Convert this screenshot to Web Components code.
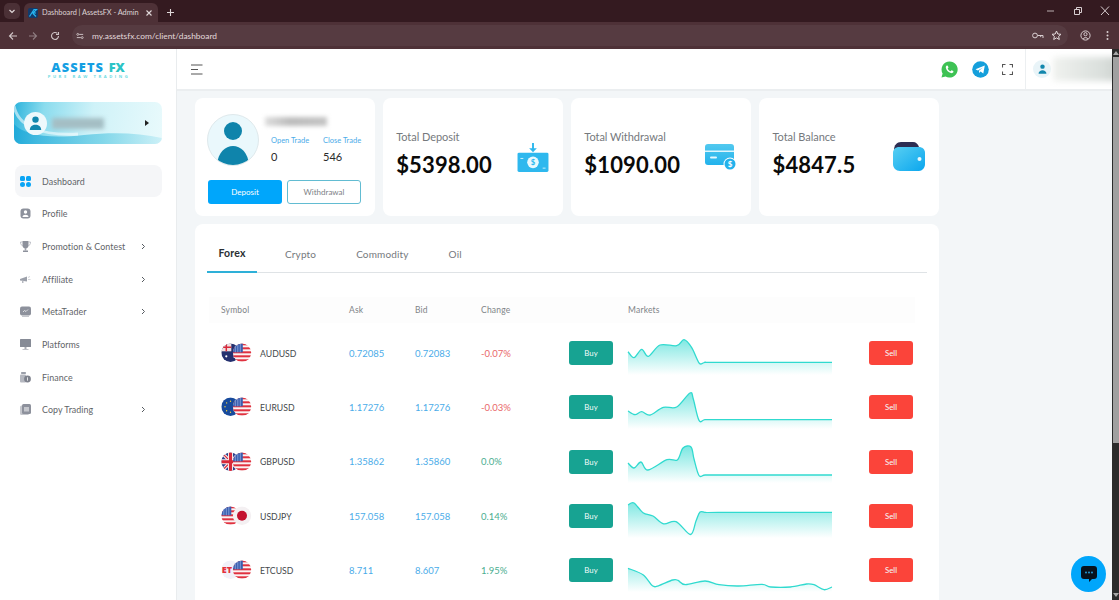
<!DOCTYPE html>
<html>
<head>
<meta charset="utf-8">
<title>Dashboard | AssetsFX - Admin</title>
<style>
  html, body { margin: 0; height: 600px; overflow: hidden; background: #f3f6f8; font-family: "Lato", "Liberation Sans", sans-serif; }
</style>
</head>
<body>

<browser-chrome></browser-chrome>

<app-shell>
  <side-nav slot="nav">
    <nav-item icon="grid" active>Dashboard</nav-item>
    <nav-item icon="profile">Profile</nav-item>
    <nav-item icon="trophy" more>Promotion &amp; Contest</nav-item>
    <nav-item icon="horn" more>Affiliate</nav-item>
    <nav-item icon="meta" more>MetaTrader</nav-item>
    <nav-item icon="screen">Platforms</nav-item>
    <nav-item icon="finance">Finance</nav-item>
    <nav-item icon="copy" more>Copy Trading</nav-item>
  </side-nav>
  <top-bar slot="top"></top-bar>
  <div slot="main">
    <card-row>
      <profile-card></profile-card>
      <stat-card label="Total Deposit" value="$5398.00" icon="deposit"></stat-card>
      <stat-card label="Total Withdrawal" value="$1090.00" icon="card"></stat-card>
      <stat-card label="Total Balance" value="$4847.5" icon="wallet"></stat-card>
    </card-row>
    <market-panel>
      <market-row symbol="AUDUSD" ask="0.72085" bid="0.72083" change="-0.07%" flags="au,us"
        points="0,12.7 6,18.7 13.7,10.3 20.3,17.3 32,6 48.7,6.7 56,0.7 63.7,8.7 71.3,24.3 77,23.3 90,23.3 204,23.3"></market-row>
      <market-row symbol="EURUSD" ask="1.17276" bid="1.17276" change="-0.03%" flags="eu,us"
        points="0,18 7,21.7 13.7,18.7 22,22 35.3,14.3 48.7,14 62,0 65.3,6 71,27.3 77,26.7 90,26.7 204,26.7"></market-row>
      <market-row symbol="GBPUSD" ask="1.35862" bid="1.35860" change="0.0%" flags="gb,us"
        points="0,16 6,21 13,15 20,23 39,12.7 49.3,13 55,1 63,0 66,12 71,28.5 77,28 90,28 204,28"></market-row>
      <market-row symbol="USDJPY" ask="157.058" bid="157.058" change="0.14%" flags="us,jp"
        points="0,3 6,1 15,10.7 25,14 35.6,21.8 48,19.6 62.5,32.5 68,19 72,10 78,10.4 90,10.4 204,10.4"></market-row>
      <market-row symbol="ETCUSD" ask="8.711" bid="8.607" change="1.95%" flags="et,us"
        points="0,12.3 15,18.7 24.4,29.8 30.4,29.8 44.7,24 50,24.4 57.4,28.7 77,25 91,28.7 110.6,30 134,28.3 142.8,31 162.4,31 178.5,28 186,28.7 196,33.7 204,31"></market-row>
    </market-panel>
  </div>
</app-shell>

<chat-bubble></chat-bubble>

<script>
// small helper, every element here just sets its shadow html once
class Base extends HTMLElement {
  constructor() {
    super();
    this.attachShadow({ mode: 'open' });
  }
  render(html) {
    this.shadowRoot.innerHTML = html;
  }
}

class BrowserChrome extends Base {
  connectedCallback() {
    this.render(`
      <style>
        :host { display: block; height: 49px; color: #d9cfd1; font-family: "Lato", "Liberation Sans", sans-serif; }
        svg { display: block; flex: none; }
        .strip { height: 22px; background: #341a20; display: flex; align-items: flex-end; }
        .list { width: 16px; height: 16px; margin: 0 4px 3px 4px; border-radius: 5px; background: #4b3036; display: grid; place-items: center; }
        .tab { width: 134px; height: 19px; background: #4e3137; border-radius: 6px 6px 0 0; display: flex; align-items: center; box-sizing: border-box; padding: 0 5px 0 4px; gap: 4px; font-size: 7.4px; letter-spacing: -.05px; white-space: nowrap; }
        .tab span { flex: 1; color: #dcd2d4; }
        .plus { margin: 0 0 3px 5px; width: 14px; height: 14px; display: grid; place-items: center; }
        .grow { flex: 1; }
        .win { display: flex; align-self: center; gap: 15px; padding-right: 8px; }
        .bar { height: 27px; background: #4e3137; display: flex; align-items: center; }
        .nav { display: flex; align-items: center; gap: 10px; padding-left: 8px; width: 64px; }
        .omni { flex: 1; height: 21px; border-radius: 11px; background: #563b41; display: flex; align-items: center; padding: 0 6px 0 4px; gap: 8px; font-size: 8.4px; color: #e3dadb; }
        .omni .grow { flex: 1; }
        .omni .key { margin-right: -1px; }
        .end { display: flex; align-items: center; gap: 15px; padding: 0 10.5px 0 12px; }
      </style>
      <div class="strip">
        <div class="list"><svg width="8" height="8" viewBox="0 0 8 8"><path d="M1.5 3l2.5 2.5L6.5 3" fill="none" stroke="#e0d8d9" stroke-width="1.2"/></svg></div>
        <div class="tab">
          <svg width="10" height="10" viewBox="0 0 10 10"><rect width="10" height="10" rx="2" fill="#123a6b"/><path d="M1.5 8.5L6 1.5h2.5L5 5h3M5 5.5L8 8.5" fill="none" stroke="#26b4f0" stroke-width="1.2"/></svg>
          <span>Dashboard | AssetsFX - Admin</span>
          <svg width="8" height="8" viewBox="0 0 8 8"><path d="M1.5 1.5l5 5M6.5 1.5l-5 5" stroke="#e0d8d9" stroke-width="1.1"/></svg>
        </div>
        <div class="plus"><svg width="9" height="9" viewBox="0 0 9 9"><path d="M4.5 1v7M1 4.5h7" stroke="#e0d8d9" stroke-width="1.1"/></svg></div>
        <div class="grow"></div>
        <div class="win">
          <svg width="12" height="10" viewBox="0 0 12 10"><path d="M2 5h7" stroke="#b9adaf" stroke-width="1"/></svg>
          <svg width="12" height="10" viewBox="0 0 12 10"><path d="M2.5 3.5h5v5h-5zM4.5 3.5V1.5h5v5h-2" fill="none" stroke="#d9cfd1" stroke-width="1"/></svg>
          <svg width="12" height="10" viewBox="0 0 12 10"><path d="M2 .5l8 8.5M10 .5L2 9" stroke="#d9cfd1" stroke-width="1"/></svg>
        </div>
      </div>
      <div class="bar">
        <div class="nav">
          <svg width="10" height="10" viewBox="0 0 10 10"><path d="M9 5H1.5M5 1.5L1.5 5 5 8.5" fill="none" stroke="#cfc4c6" stroke-width="1.1"/></svg>
          <svg width="10" height="10" viewBox="0 0 10 10"><path d="M1 5h7.5M5 1.5L8.5 5 5 8.5" fill="none" stroke="#8f7d81" stroke-width="1.1"/></svg>
          <svg width="10" height="10" viewBox="0 0 10 10" style="margin-left:2px"><path d="M8.5 5A3.5 3.5 0 1 1 7.4 2.4M8.5 1v2.5H6" fill="none" stroke="#cfc4c6" stroke-width="1.1"/></svg>
        </div>
        <div class="omni">
          <svg width="8" height="8" viewBox="0 0 10 10"><path d="M4 3h5M1 7h5" stroke="#d9cfd1" stroke-width="1.1"/><circle cx="2.2" cy="3" r="1.2" fill="none" stroke="#d9cfd1"/><circle cx="7.8" cy="7" r="1.2" fill="none" stroke="#d9cfd1"/></svg>
          <span>my.assetsfx.com/client/dashboard</span>
          <div class="grow"></div>
          <svg class="key" width="12" height="9" viewBox="0 0 12 9"><circle cx="3" cy="4.5" r="2.4" fill="none" stroke="#d9cfd1"/><path d="M5.5 4.5h5.5v2.5M8.7 4.5v1.6" fill="none" stroke="#d9cfd1"/></svg>
          <svg width="11" height="11" viewBox="0 0 11 11"><path d="M5.5 1l1.3 3 3.2.3-2.4 2.1.7 3.1-2.8-1.6-2.8 1.6.7-3.1L1 4.3 4.2 4z" fill="none" stroke="#e3dadb" stroke-width="1"/></svg>
        </div>
        <div class="end">
          <svg width="11" height="11" viewBox="0 0 11 11"><circle cx="5.5" cy="5.5" r="4.6" fill="none" stroke="#d9cfd1"/><circle cx="5.5" cy="4.2" r="1.6" fill="none" stroke="#d9cfd1"/><path d="M2.8 9c.6-1.8 4.8-1.8 5.4 0" fill="none" stroke="#d9cfd1"/></svg>
          <svg width="3" height="11" viewBox="0 0 3 11"><circle cx="1.5" cy="2" r="1" fill="#d9cfd1"/><circle cx="1.5" cy="5.5" r="1" fill="#d9cfd1"/><circle cx="1.5" cy="9" r="1" fill="#d9cfd1"/></svg>
        </div>
      </div>
    `);
  }
}

class AppShell extends Base {
  connectedCallback() {
    this.render(`
      <style>
        :host { display: grid; grid-template-columns: 177px 935px 7px; grid-template-rows: 42px 1fr; height: 551px; overflow: hidden; }
        .nav { grid-row: 1 / 3; background: #fff; border-right: 1px solid #e9ecee; box-sizing: border-box; }
        .top { grid-column: 2; }
        .main { grid-column: 2; grid-row: 2; padding: 7px 0 0 18px; overflow: hidden; }
        .scroll { grid-column: 3; grid-row: 1 / 3; background: #2b2b2b; display: flex; flex-direction: column; align-items: center; position: relative; }
        .thumb { width: 6px; height: 386px; margin-top: 8px; background: #a0a0a0; }
        .grow { flex: 1; }
        .arrow { width: 0; height: 0; border-left: 3px solid transparent; border-right: 3px solid transparent; margin: 3px 0; }
        .up { border-bottom: 4px solid #a8a8a8; position: absolute; top: 0; margin: 2px 0; }
        .down { border-top: 4px solid #a8a8a8; }
      </style>
      <div class="nav"><slot name="nav"></slot></div>
      <div class="top"><slot name="top"></slot></div>
      <div class="main"><slot name="main"></slot></div>
      <div class="scroll">
        <div class="arrow up"></div>
        <div class="thumb"></div>
        <div class="grow"></div>
        <div class="arrow down"></div>
      </div>
    `);
  }
}

class SideNav extends Base {
  connectedCallback() {
    this.render(`
      <style>
        :host { display: block; padding-top: 12px; }
        .logo { text-align: center; height: 41px; font-family: "Open Sans", sans-serif; }
        .name { font-size: 12.8px; font-weight: 800; letter-spacing: 1.15px; line-height: 13px; color: #159fe3; }
        .name b { color: #2cc4c6; font-weight: 800; letter-spacing: 0; }
        .tag { font-size: 4.2px; font-weight: 700; letter-spacing: 2.55px; color: #6fdbe2; line-height: 6px; margin-right: -2px; }
        .user { margin: 0 14px 20.8px 14px; height: 42px; border-radius: 7px; overflow: hidden; position: relative; background: linear-gradient(100deg, #2cb3dc 0%, #8bdcee 20%, #cff2f8 52%, #e9fafc 100%); display: flex; align-items: center; padding-left: 10px; gap: 5px; }
        .user svg.wave { position: absolute; inset: 0; }
        .ava { width: 23px; height: 23px; border-radius: 50%; background: #eef9fc; display: grid; place-items: center; position: relative; }
        .blur { width: 52px; height: 11px; background: #a4bec4; filter: blur(2px); position: relative; }
        .caret { position: absolute; right: 13px; top: 18px; width: 0; height: 0; border-left: 4px solid #222; border-top: 3px solid transparent; border-bottom: 3px solid transparent; }
        .items { padding: 0 14px 0 15px; display: flex; flex-direction: column; }
      </style>
      <div class="logo">
        <div class="name">ASSETS <b>FX</b></div>
        <div class="tag">PURE RAW TRADING</div>
      </div>
      <div class="user">
        <svg class="wave" width="148" height="42" viewBox="0 0 148 42"><defs><linearGradient id="uw" x1="0" y1="0" x2="1" y2="0"><stop offset="0" stop-color="#1aa6d8"/><stop offset=".6" stop-color="#6ed0e6"/><stop offset="1" stop-color="#c5eef6"/></linearGradient></defs><path d="M0 42V22C10 33 34 37 70 33 100 30 125 31 148 36V42z" fill="url(#uw)" opacity=".8"/><path d="M0 4C4 24 26 34 64 32" fill="none" stroke="#fff" stroke-width="3" opacity=".55"/></svg>
        <div class="ava"><svg width="13" height="14" viewBox="0 0 13 14"><circle cx="6.5" cy="3.6" r="3.2" fill="#1287ad"/><path d="M.8 14c0-7 11.4-7 11.4 0z" fill="#1287ad"/></svg></div>
        <div class="blur"></div>
        <div class="caret"></div>
      </div>
      <div class="items"><slot></slot></div>
    `);
  }
}

const navIcons = {
  grid: '<rect x="0" y="0" width="5" height="5" rx="1.5" fill="#0aa5f5"/><rect x="6" y="0" width="5" height="5" rx="1.5" fill="#0aa5f5"/><rect x="0" y="6" width="5" height="5" rx="2.5" fill="#0aa5f5"/><rect x="6" y="6" width="5" height="5" rx="2.5" fill="#0aa5f5"/>',
  profile: '<rect x=".5" y=".5" width="10" height="10" rx="3" fill="#8d919c"/><circle cx="5.5" cy="4" r="1.7" fill="#fff"/><path d="M2.5 9c0-3 6-3 6 0z" fill="#fff"/>',
  trophy: '<path d="M2.5 0h6v4.5c0 4-6 4-6 0z" fill="#8d919c"/><path d="M2.5 1H.5c0 2.5 1 3.5 2.5 3.8M8.5 1h2c0 2.5-1 3.5-2.5 3.8" fill="none" stroke="#b0b3bb" stroke-width=".8"/><rect x="4.7" y="7" width="1.6" height="2.5" fill="#a0a3ad"/><rect x="3" y="9.5" width="5" height="1.5" fill="#8d919c"/>',
  horn: '<path d="M0 5l7-2.5v5L0 6.5z" fill="#9ca0aa"/><rect x="2" y="6.5" width="1.5" height="2.5" fill="#b5b8c0"/><path d="M8 3.5l2-1M8 5.5h2.5" stroke="#c0c3ca" stroke-width=".7"/>',
  meta: '<rect x="0" y=".5" width="11" height="9" rx="2" fill="#8d919c"/><path d="M3 6l1.5-1.5 1.5 1 2-2" fill="none" stroke="#fff" stroke-width=".7"/><rect x="2" y="10" width="7" height="1" fill="#c5c7cd"/>',
  screen: '<rect x="0" y="0" width="11" height="8" rx=".5" fill="#868b96"/><rect x="4.5" y="8" width="2" height="2" fill="#a9acb4"/><rect x="2.5" y="10" width="6" height=".9" fill="#b9bbc2"/>',
  finance: '<rect x="1" y="0" width="5" height="2" rx=".8" fill="#9ca0aa"/><rect x="0" y="2.5" width="6" height="8" rx="1" fill="#b5b8c0"/><circle cx="7.5" cy="7" r="3.4" fill="#7d818c"/><path d="M7.5 5.3v3.4" stroke="#fff" stroke-width=".8"/>',
  copy: '<rect x="0" y="1.5" width="9" height="9.5" rx="1.5" fill="#c5c7cd"/><rect x="2" y="0" width="9" height="10" rx="1.5" fill="#8d919c"/><rect x="4" y="3" width="5" height="4.5" fill="#c5c7cd"/>'
};

class NavItem extends Base {
  connectedCallback() {
    const active = this.hasAttribute('active');
    const more = this.hasAttribute('more');
    this.render(`
      <style>
        :host { display: flex; align-items: center; height: 32.67px; padding-left: 5px; box-sizing: border-box; border-radius: 8px; color: #5f6468; font-size: 8.9px; letter-spacing: .05px; ${active ? 'background: #f5f6f8;' : ''} }
        svg.ic { width: 11px; height: 11px; margin-right: 11px; flex: none; }
        .lb { flex: 1; }
        .ch { margin-right: 16px; }
      </style>
      <svg class="ic" viewBox="0 0 11 11">${navIcons[this.getAttribute('icon')]}</svg>
      <span class="lb"><slot></slot></span>
      ${more ? '<svg class="ch" width="5" height="7" viewBox="0 0 5 7"><path d="M1 1l2.5 2.5L1 6" fill="none" stroke="#555a60" stroke-width="1"/></svg>' : ''}
    `);
  }
}

class TopBar extends Base {
  connectedCallback() {
    this.render(`
      <style>
        :host { display: flex; align-items: center; height: 42px; box-sizing: border-box; background: #fff; border-bottom: 2px solid #ebeef0; padding-left: 14px; }
        .grow { flex: 1; }
        .right { display: flex; align-items: center; height: 100%; }
        .gap1 { width: 13px; } .gap2 { width: 14px; }
        .user { margin-left: 12px; border-left: 1px solid #eceff1; height: 100%; width: 87px; display: flex; align-items: center; padding-left: 7px; box-sizing: border-box; gap: 2px; overflow: hidden; }
        .ava { width: 18px; height: 18px; border-radius: 50%; background: #e9f4f8; display: grid; place-items: center; flex: none; }
        .blur { width: 70px; height: 24px; margin-right: -8px; background: linear-gradient(90deg, #f0f2ef, #dadfdc 70%, #c9cecb); filter: blur(3px); flex: none; }
      </style>
      <svg width="12" height="11" viewBox="0 0 12 11"><path d="M0 1h11.5M0 5.5h7M0 10h11.5" stroke="#555" stroke-width="1.1"/></svg>
      <div class="grow"></div>
      <div class="right">
        <svg width="17" height="17" viewBox="0 0 17 17"><path d="M8.5.5a8 8 0 0 0-6.9 12L.5 16.5l4.1-1.1A8 8 0 1 0 8.5.5z" fill="#3ec254"/><path d="M5.8 4.5c-.8.5-1.2 1.5-.9 2.6.6 2.5 2.6 4.5 5 5 1.1.2 2.1-.2 2.5-1l-.1-1-1.8-.9-.9 1c-1.2-.4-2.4-1.5-2.9-2.8l.8-.9L6.8 4.7z" fill="#fff"/></svg>
        <div class="gap2"></div>
        <svg width="17" height="17" viewBox="0 0 17 17"><circle cx="8.5" cy="8.5" r="8.3" fill="#159fdb"/><path d="M3.5 8.3l9.3-3.7-1.5 8-2.7-2-1.4 1.4-.3-2.3 4-3.2-5 2.900z" fill="#fff"/></svg>
        <div class="gap1"></div>
        <svg width="11" height="11" viewBox="0 0 11 11"><path d="M.5 3.5v-3h3M7.5.5h3v3M10.5 7.5v3h-3M3.5 10.5h-3v-3" fill="none" stroke="#555" stroke-width="1.1"/></svg>
        <div class="user">
          <div class="ava"><svg width="9" height="10" viewBox="0 0 13 14"><circle cx="6.5" cy="3.6" r="3.2" fill="#1287ad"/><path d="M.8 14c0-7 11.4-7 11.4 0z" fill="#1287ad"/></svg></div>
          <div class="blur"></div>
        </div>
      </div>
    `);
  }
}

class CardRow extends Base {
  connectedCallback() {
    this.render(`
      <style>
        :host { display: grid; grid-template-columns: repeat(4, 179.5px); column-gap: 8.67px; width: 744px; margin-bottom: 8px; }
      </style>
      <slot></slot>
    `);
  }
}

class ProfileCard extends Base {
  connectedCallback() {
    this.render(`
      <style>
        :host { display: block; height: 118px; background: #fff; border-radius: 8px; box-sizing: border-box; padding: 16px 13px 0 12px; }
        .head { display: flex; gap: 6px; height: 66px; }
        .ava { width: 50px; height: 50px; border-radius: 50%; border: 1px solid #dfe9ec; background: #eaf8fc; overflow: hidden; flex: none; }
        .ava svg { display: block; }
        .blur { width: 62px; height: 9px; margin-top: 3px; background: linear-gradient(90deg, #dcdcdc, #bdbdbd 40%, #c4c4c4); filter: blur(2px); }
        .stats { display: grid; grid-template-columns: 52px 40px; margin: 10px 0 0 6px; font-size: 7.5px; color: #4bace9; white-space: nowrap; }
        .stats b { font-weight: 400; color: #2a2a2a; font-size: 11px; line-height: 14px; padding-top: 5px; display: block; }
        .btns { display: grid; grid-template-columns: 74px 74px; gap: 5px; margin-left: 1px; }
        .btn { height: 24px; border-radius: 3px; box-sizing: border-box; display: grid; place-items: center; font-size: 8px; }
        .dep { background: #00a6fb; color: #fff; }
        .wd { border: 1px solid #62bcd2; color: #7d8186; }
      </style>
      <div class="head">
        <div class="ava"><svg width="50" height="50" viewBox="0 0 50 50"><circle cx="25" cy="16" r="9" fill="#0f84ab"/><path d="M9 52c0-28 32-28 32 0z" fill="#0f84ab"/></svg></div>
        <div>
          <div class="blur"></div>
          <div class="stats">
            <div>Open Trade<b>0</b></div>
            <div>Close Trade<b>546</b></div>
          </div>
        </div>
      </div>
      <div class="btns">
        <div class="btn dep">Deposit</div>
        <div class="btn wd">Withdrawal</div>
      </div>
    `);
  }
}

const statIcons = {
  deposit: `<svg width="32" height="29" viewBox="0 0 32 30"><rect x="0" y="10" width="32" height="20" rx="1.5" fill="#2eb8ee"/><path d="M3 16h3M26 26h3" stroke="#cdeffb" stroke-width="1"/><circle cx="16" cy="20" r="6" fill="#e9f9fe"/><text x="16" y="23" font-size="8" font-weight="700" text-anchor="middle" fill="#2eb8ee" font-family="Lato">$</text><path d="M16 0v7" stroke="#2eb8ee" stroke-width="2"/><path d="M12 5.5l4 4 4-4z" fill="#2eb8ee"/></svg>`,
  card: `<svg width="32" height="26" viewBox="0 0 32 26"><defs><linearGradient id="c" x1="0" y1="0" x2="0" y2="1"><stop offset="0" stop-color="#52c9ef"/><stop offset="1" stop-color="#22b2ec"/></linearGradient></defs><rect x="0" y="0" width="29" height="21" rx="3" fill="url(#c)"/><rect x="0" y="6.5" width="29" height="1.5" fill="#dff6fd"/><rect x="5" y="12.5" width="7" height="2" rx="1" fill="#e4f8fe"/><circle cx="25" cy="20" r="6.5" fill="#fff"/><circle cx="25" cy="20" r="5.5" fill="#22b2ec"/><text x="25" y="23" font-size="8" font-weight="700" text-anchor="middle" fill="#fff" font-family="Lato">$</text></svg>`,
  wallet: `<svg width="32" height="29" viewBox="0 0 32 29"><defs><linearGradient id="w" x1="0" y1="0" x2="1" y2="1"><stop offset="0" stop-color="#58cff2"/><stop offset="1" stop-color="#0aa6ee"/></linearGradient></defs><path d="M1 8c0-5 3-8 7-8h12c3 0 5 2 6 5v5H1z" fill="#2d2d52"/><path d="M0 11c0-4 3-6 6-6h20c3 0 6 2 6 6v11c0 4-3 7-6 7H7c-4 0-7-3-7-7z" fill="url(#w)"/><circle cx="26.5" cy="17" r="2" fill="#eaf9fe"/></svg>`
};

class StatCard extends Base {
  connectedCallback() {
    const kind = this.getAttribute('icon');
    const top = kind === 'wallet' ? 13 : kind === 'card' ? 15 : 14;
    this.render(`
      <style>
        :host { display: flex; align-items: flex-start; height: 118px; background: #fff; border-radius: 8px; box-sizing: border-box; padding: 30.5px 14px 0 13px; }
        .txt { flex: 1; }
        .lb { font-size: 11px; color: #75797d; line-height: 15px; letter-spacing: -.05px; }
        .val { font-size: 22px; font-weight: 700; color: #0a0a0a; line-height: 28px; margin-top: 7.5px; letter-spacing: .15px; }
        .ic { padding-top: ${top}px; }
        .ic svg { display: block; }
      </style>
      <div class="txt">
        <div class="lb">${this.getAttribute('label')}</div>
        <div class="val">${this.getAttribute('value')}</div>
      </div>
      <div class="ic">${statIcons[kind]}</div>
    `);
  }
}

class MarketPanel extends Base {
  connectedCallback() {
    this.render(`
      <style>
        :host { display: block; width: 744px; height: 400px; background: #fff; border-radius: 8px 8px 0 0; box-sizing: border-box; padding: 11px 12px 0 12px; color: #75797d; }
        .tabs { display: flex; height: 37px; border-bottom: 1px solid #dfe3e6; font-size: 10px; letter-spacing: .15px; }
        .tab { display: grid; place-items: center; height: 37px; box-sizing: border-box; }
        .tab.on { width: 50px; color: #2a2f33; font-weight: 700; font-size: 10.5px; border-bottom: 2px solid #2eb0d8; height: 38px; margin-right: 28px; }
        .head { display: grid; grid-template-columns: 128px 66px 66px 147px 1fr; margin: 24px 12px 3px 2px; height: 26px; align-items: center; background: #fdfdfd; padding-left: 12px; font-size: 8.5px; letter-spacing: .2px; color: #808488; }
      </style>
      <div class="tabs">
        <div class="tab on">Forex</div>
        <div class="tab" style="margin-right:40px">Crypto</div>
        <div class="tab" style="margin-right:40px">Commodity</div>
        <div class="tab">Oil</div>
      </div>
      <div class="head"><span>Symbol</span><span>Ask</span><span>Bid</span><span>Change</span><span>Markets</span></div>
      <slot></slot>
    `);
  }
}

function flagSvg(kind, cx, id) {
  const r = 9.2;
  let art = '';
  const x = cx - r, y = 0.3;
  if (kind === 'us') {
    for (let i = 0; i < 5; i++) art += `<rect x="${x}" y="${y + i * 4}" width="19" height="2" fill="#e0313f"/>`;
    art = `<rect x="${x}" y="${y}" width="19" height="19" fill="#fbf3f3"/>` + art;
    art += `<rect x="${x}" y="${y}" width="10" height="9" fill="#3a5fb0"/>`;
    for (let i = 0; i < 3; i++) art += `<path d="M${x + 2.5 + i * 2.5} ${y} v9" stroke="#9db4e3" stroke-width=".7"/>`;
  } else if (kind === 'au') {
    art = `<rect x="${x}" y="${y}" width="19" height="19" fill="#23306f"/><rect x="${x}" y="${y}" width="10" height="8" fill="#f0dede"/><path d="M${x} ${y + 4}h10M${x + 5} ${y}v8" stroke="#d8283a" stroke-width="1.5"/><circle cx="${x + 5}" cy="${y + 13}" r="1.1" fill="#fff"/><circle cx="${x + 13}" cy="${y + 14}" r=".8" fill="#fff"/>`;
  } else if (kind === 'eu') {
    art = `<rect x="${x}" y="${y}" width="19" height="19" fill="#174a9c"/>`;
    for (let i = 0; i < 8; i++) {
      const a = i * Math.PI / 4;
      art += `<circle cx="${cx + Math.cos(a) * 5.5}" cy="${y + 9.5 + Math.sin(a) * 5.5}" r=".7" fill="#f5d33a"/>`;
    }
  } else if (kind === 'gb') {
    art = `<rect x="${x}" y="${y}" width="19" height="19" fill="#2b3f8c"/><path d="M${x} ${y}l19 19M${x + 19} ${y}l-19 19" stroke="#f5e8e8" stroke-width="3.5"/><path d="M${x} ${y}l19 19M${x + 19} ${y}l-19 19" stroke="#d8283a" stroke-width="1.2"/><path d="M${x} ${y + 9.5}h19M${cx} ${y}v19" stroke="#f5e8e8" stroke-width="5"/><path d="M${x} ${y + 9.5}h19M${cx} ${y}v19" stroke="#d8283a" stroke-width="3"/>`;
  } else if (kind === 'jp') {
    art = `<rect x="${x}" y="${y}" width="19" height="19" fill="#f4f0f2"/><circle cx="${cx}" cy="${y + 9.5}" r="5" fill="#c4112f"/>`;
  } else if (kind === 'et') {
    art = `<rect x="${x}" y="${y}" width="19" height="19" fill="#f1f1f8"/><text x="${x + 0.5}" y="${y + 12.5}" font-size="9" font-weight="800" fill="#e4303c" font-family="Open Sans">ET</text>`;
  }
  return `<clipPath id="${id}"><circle cx="${cx}" cy="9.8" r="${r}"/></clipPath><g clip-path="url(#${id})">${art}</g>`;
}

class FlagPair extends Base {
  connectedCallback() {
    const [a, b] = this.getAttribute('flags').split(',');
    this.render(`
      <style>
        :host { display: block; width: 31px; height: 20px; }
        svg { display: block; }
      </style>
      <svg width="31" height="20" viewBox="0 0 31 20">${flagSvg(a, 9.5, 'fa')}${flagSvg(b, 21, 'fb')}</svg>
    `);
  }
}

// catmull-rom through the points from the points attribute
function smoothPath(pts) {
  let d = `M${pts[0][0]} ${pts[0][1]}`;
  for (let i = 0; i < pts.length - 1; i++) {
    const p0 = pts[i - 1] || pts[i], p1 = pts[i], p2 = pts[i + 1], p3 = pts[i + 2] || p2;
    const c1x = p1[0] + (p2[0] - p0[0]) / 6, c1y = p1[1] + (p2[1] - p0[1]) / 6;
    const c2x = p2[0] - (p3[0] - p1[0]) / 6, c2y = p2[1] - (p3[1] - p1[1]) / 6;
    d += `C${c1x.toFixed(1)} ${c1y.toFixed(1)} ${c2x.toFixed(1)} ${c2y.toFixed(1)} ${p2[0]} ${p2[1]}`;
  }
  return d;
}

class SparkLine extends Base {
  connectedCallback() {
    const pts = this.getAttribute('points').split(' ').map(p => p.split(',').map(Number));
    const line = smoothPath(pts);
    this.render(`
      <style>
        :host { display: block; width: 204px; height: 36px; margin-top: 7px; }
        svg { display: block; overflow: visible; }
      </style>
      <svg width="204" height="36" viewBox="0 0 204 36">
        <defs><linearGradient id="g" gradientUnits="userSpaceOnUse" x1="0" y1="0" x2="0" y2="36">
          <stop offset="0" stop-color="#2fd9d0" stop-opacity=".62"/>
          <stop offset="1" stop-color="#2fd9d0" stop-opacity="0"/>
        </linearGradient></defs>
        <path d="${line}L204 36L0 36Z" fill="url(#g)"/>
        <path d="${line}" fill="none" stroke="#30dacf" stroke-width="1.3"/>
      </svg>
    `);
  }
}

class MarketRow extends Base {
  connectedCallback() {
    const change = this.getAttribute('change');
    const down = change.startsWith('-');
    this.render(`
      <style>
        :host { display: grid; grid-template-columns: 128px 66px 66px 88px 59px 241px 44px; align-items: center; height: 54.3px; margin-left: 2px; padding-left: 12px; font-size: 9.5px; }
        .sym { display: flex; align-items: center; gap: 8px; color: #45494d; }
        .sym span { font-size: 8.7px; }
        .num { color: #4bace9; }
        .chg { color: ${down ? '#e9676a' : '#4aae90'}; }
        .btn { width: 44px; height: 24px; border-radius: 3px; display: grid; place-items: center; color: #f4fbfa; font-size: 7.8px; }
        .buy { background: #17a392; }
        .sell { background: #fb443a; }
      </style>
      <div class="sym"><flag-pair flags="${this.getAttribute('flags')}"></flag-pair><span>${this.getAttribute('symbol')}</span></div>
      <div class="num">${this.getAttribute('ask')}</div>
      <div class="num">${this.getAttribute('bid')}</div>
      <div class="chg">${change}</div>
      <div class="btn buy">Buy</div>
      <spark-line points="${this.getAttribute('points')}"></spark-line>
      <div class="btn sell">Sell</div>
    `);
  }
}

class ChatBubble extends Base {
  connectedCallback() {
    this.render(`
      <style>
        :host { position: fixed; left: 1071px; top: 556px; width: 35px; height: 36px; border-radius: 50%; background: #00a6fb; display: grid; place-items: center; }
      </style>
      <svg width="18" height="18" viewBox="0 0 18 18"><path d="M4 1h10a3 3 0 0 1 3 3v7a3 3 0 0 1-3 3h-2l-3 3v-3H4a3 3 0 0 1-3-3V4a3 3 0 0 1 3-3z" fill="#07121d"/><circle cx="6" cy="7.5" r=".9" fill="#2aa6e8"/><circle cx="9" cy="7.5" r=".9" fill="#2aa6e8"/><circle cx="12" cy="7.5" r=".9" fill="#2aa6e8"/></svg>
    `);
  }
}

customElements.define('browser-chrome', BrowserChrome);
customElements.define('app-shell', AppShell);
customElements.define('side-nav', SideNav);
customElements.define('nav-item', NavItem);
customElements.define('top-bar', TopBar);
customElements.define('card-row', CardRow);
customElements.define('profile-card', ProfileCard);
customElements.define('stat-card', StatCard);
customElements.define('market-panel', MarketPanel);
customElements.define('flag-pair', FlagPair);
customElements.define('spark-line', SparkLine);
customElements.define('market-row', MarketRow);
customElements.define('chat-bubble', ChatBubble);
</script>
</body>
</html>
